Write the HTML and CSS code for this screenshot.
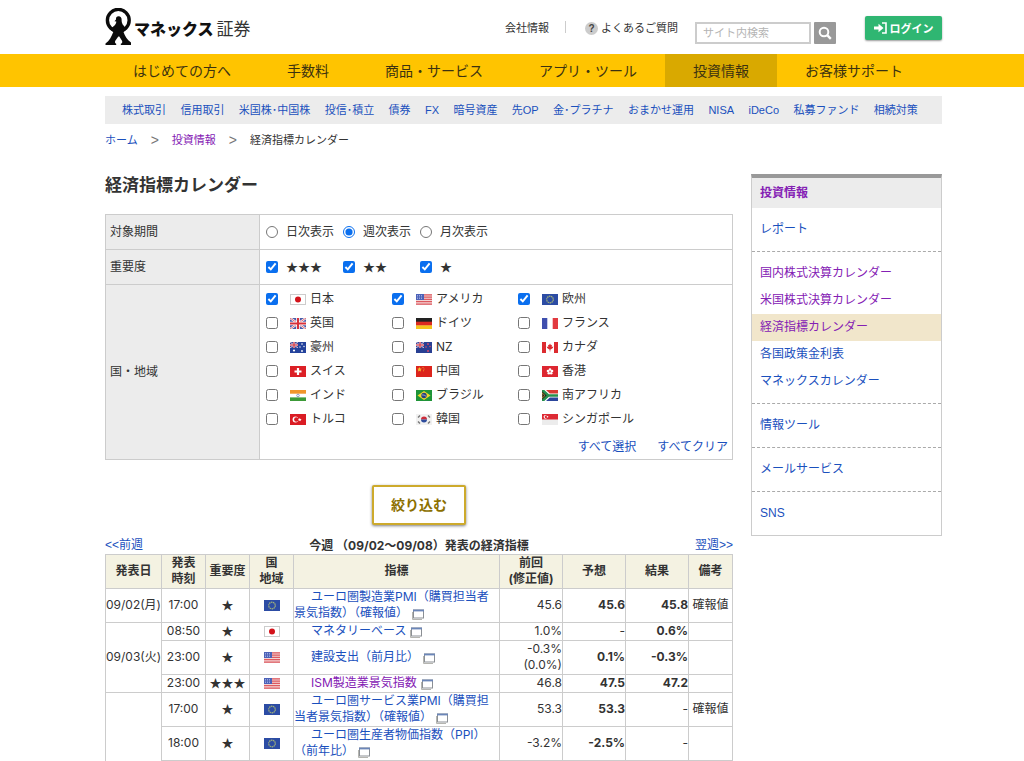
FILE: index.html
```html
<!DOCTYPE html>
<html lang="ja">
<head>
<meta charset="utf-8">
<title>経済指標カレンダー</title>
<link rel="stylesheet" href="styles.css">
</head>
<body>
<svg class="sprite" aria-hidden="true">
  <symbol id="jp" viewBox="0 0 16 11"><rect width="16" height="11" fill="#fff"/><circle cx="8" cy="5.500" r="3" fill="#d3121a"/><rect x=".5" y=".5" width="15" height="10" fill="none" stroke="#ccc"/></symbol>
  <symbol id="us" viewBox="0 0 16 11"><rect width="16" height="11" fill="#f3d4d4"/><path d="M0 .8h16M0 3.100h16M0 5.400h16M0 7.700h16M0 10.200h16" stroke="#dd5a60" stroke-width="1.300"/><rect width="8" height="6" fill="#4c62b8"/><path d="M1 1.500h6M1 3h6M1 4.500h6" stroke="#bcc6ee" stroke-width=".7" stroke-dasharray="1 1"/></symbol>
  <symbol id="eu" viewBox="0 0 16 11"><rect width="16" height="11" fill="#2c4ca4"/><circle cx="8" cy="5.500" r="3.300" fill="none" stroke="#9fb07a" stroke-width="1.200" stroke-dasharray="1.500 .5"/></symbol>
  <symbol id="gb" viewBox="0 0 16 11"><rect width="16" height="11" fill="#4a5ba8"/><path d="M0 0l16 11M16 0L0 11" stroke="#fff" stroke-width="2.200"/><path d="M0 0l16 11M16 0L0 11" stroke="#d8404a" stroke-width=".8"/><path d="M8 0v11M0 5.500h16" stroke="#fff" stroke-width="3.600"/><path d="M8 0v11M0 5.500h16" stroke="#d8303a" stroke-width="2"/></symbol>
  <symbol id="de" viewBox="0 0 16 11"><rect width="16" height="4" fill="#222"/><rect y="3.700" width="16" height="4" fill="#dc2a20"/><rect y="7.400" width="16" height="3.600" fill="#f5c51c"/></symbol>
  <symbol id="fr" viewBox="0 0 16 11"><rect width="16" height="11" fill="#fff"/><rect width="5.300" height="11" fill="#3f4fae"/><rect x="10.700" width="5.300" height="11" fill="#e23a40"/></symbol>
  <symbol id="canton" viewBox="0 0 8 6"><rect width="8" height="6" fill="#3c4c9c"/><path d="M0 0l8 6M8 0L0 6" stroke="#d8c8dc" stroke-width="1"/><path d="M4 0v6M0 3h8" stroke="#e4d4e0" stroke-width="1.800"/><path d="M4 0v6M0 3h8" stroke="#d8303a" stroke-width="1.100"/></symbol>
  <symbol id="au" viewBox="0 0 16 11"><rect width="16" height="11" fill="#24439c"/><use href="#canton" width="8" height="6"/><g fill="#fff"><circle cx="4" cy="8.500" r="1.100"/><circle cx="12" cy="2" r=".8"/><circle cx="10" cy="5" r=".7"/><circle cx="14" cy="4.500" r=".7"/><circle cx="12" cy="9" r=".9"/></g></symbol>
  <symbol id="nz" viewBox="0 0 16 11"><rect width="16" height="11" fill="#283f92"/><use href="#canton" width="8" height="6"/><g fill="#d84a68"><circle cx="12" cy="2" r=".9"/><circle cx="10" cy="5" r=".8"/><circle cx="14" cy="4.500" r=".8"/><circle cx="12" cy="9" r="1"/></g></symbol>
  <symbol id="ca" viewBox="0 0 16 11"><rect width="16" height="11" fill="#fff"/><path d="M0 0h4v11H0zM12 0h4v11h-4zM8 1.500l1 1.800 1-.5-.3 2.200 1.600-.5-.5 1.500-2 1.600H8.300v1.900h-.6V7.600h-.5l-2-1.600-.5-1.500 1.600.5L6 2.800l1 .5z" fill="#dc2b30"/></symbol>
  <symbol id="ch" viewBox="0 0 16 11"><rect width="16" height="11" fill="#dc2026"/><path d="M8 2v7M4.500 5.500h7" stroke="#fff" stroke-width="2.200"/></symbol>
  <symbol id="cn" viewBox="0 0 16 11"><rect width="16" height="11" fill="#dc241c"/><path d="M3.500 1l.7 1.500 1.600.2-1.200 1.100.4 1.700-1.500-.8-1.500.8.400-1.700L1.200 2.700l1.600-.2z" fill="#f6c02c"/><g fill="#f6c02c"><circle cx="7" cy="1.500" r=".5"/><circle cx="8" cy="3" r=".5"/><circle cx="7.600" cy="4.800" r=".5"/></g></symbol>
  <symbol id="hk" viewBox="0 0 16 11"><rect width="16" height="11" fill="#dd2630"/><g fill="#fff"><circle cx="8" cy="3.600" r="1.300"/><circle cx="10" cy="5" r="1.300"/><circle cx="9.200" cy="7.300" r="1.300"/><circle cx="6.800" cy="7.300" r="1.300"/><circle cx="6" cy="5" r="1.300"/></g><circle cx="8" cy="5.500" r=".7" fill="#e89a9e"/></symbol>
  <symbol id="in" viewBox="0 0 16 11"><rect width="16" height="11" fill="#fff"/><rect width="16" height="3.700" fill="#f0962c"/><rect y="7.400" width="16" height="3.600" fill="#3c9a38"/><circle cx="8" cy="5.500" r="1.300" fill="none" stroke="#7a86b8" stroke-width=".8"/></symbol>
  <symbol id="br" viewBox="0 0 16 11"><rect width="16" height="11" fill="#1f9438"/><path d="M8 1l6.500 4.500L8 10 1.500 5.500z" fill="#f2d829"/><circle cx="8" cy="5.500" r="2.700" fill="#24407c"/><path d="M5.800 4.900q2.500-.3 4.300 1.400" stroke="#dfe8f4" stroke-width=".6" fill="none"/></symbol>
  <symbol id="za" viewBox="0 0 16 11"><rect width="16" height="5.500" fill="#d93a32"/><rect y="5.500" width="16" height="5.500" fill="#2b469c"/><path d="M0-1l7 6.500L0 12M7 5.500h9" stroke="#fff" stroke-width="4" fill="none"/><path d="M0 0v11l6-5.500z" fill="#222"/><path d="M0-.5l6.500 6L0 11.500M6 5.500h10" stroke="#27904c" stroke-width="2.400" fill="none"/><path d="M0 2.800v5.400l3-2.700z" fill="#222" stroke="#ecc53a" stroke-width=".6"/></symbol>
  <symbol id="tr" viewBox="0 0 16 11"><rect width="16" height="11" fill="#da1c24"/><circle cx="5.500" cy="5.500" r="2.900" fill="#fff"/><circle cx="6.300" cy="5.500" r="2.200" fill="#da1c24"/><path d="M9.800 3.800l.5 1.200 1.300.1-1 .8.3 1.300-1.100-.7-1.100.7.300-1.300-1-.8 1.300-.1z" fill="#fff"/></symbol>
  <symbol id="kr" viewBox="0 0 16 11"><rect width="16" height="11" fill="#f1f1f1"/><path d="M5 5.500a3 3 0 0 1 6 0z" fill="#cf2c3a"/><path d="M5 5.500a3 3 0 0 0 6 0z" fill="#2e4c9c"/><path d="M2 3.500l2-2M12 1.500l2 2M2 7.500l2 2M12 9.500l2-2" stroke="#777" stroke-width="1.400"/></symbol>
  <symbol id="sg" viewBox="0 0 16 11"><rect width="16" height="11" fill="#ececec"/><rect width="16" height="5.500" fill="#dd2a34"/><circle cx="3.500" cy="2.800" r="1.900" fill="#fff"/><circle cx="4.300" cy="2.800" r="1.600" fill="#dd2a34"/><circle cx="5.500" cy="2.800" r=".8" fill="#fff"/></symbol>
  <symbol id="win" viewBox="0 0 12 11"><path d="M.5 3v7.500H10" fill="none" stroke="#b5b5b0" stroke-width="1"/><rect x="1.500" y="1" width="10" height="8" fill="#fff" stroke="#8b8f94"/><path d="M1 1.500h11" stroke="#6b86b8" stroke-width="1.800"/></symbol>
</svg>

<header class="header">
  <a class="logo" href="#">
    <svg class="logo-mark" viewBox="0 0 27 38" aria-hidden="true"><circle cx="13.300" cy="12.300" r="10.900" fill="none" stroke="#0b0b0b" stroke-width="3.400"/><path d="M9.500 13.200l1.500-1.800c-.2-2 .8-3.200 2.600-3.200 2 0 3 1.400 3 3.400 0 2.400.2 4.400 2.400 6.400l2.500 3.500-3 2.500c1.500 4 3.500 8 7.500 10.500V37H15.800v-1.200c1.700-.5 1.700-1.600 1.200-3l-2.700-4.300h-1l-3 4.300c-.7 1.400-.3 2.500.9 3V37H.5v-1.500C4.500 33 6.500 28.500 8.300 24l-3-2.500 3-3c1.800-1.300 3-2.800 3-5z" fill="#0b0b0b"/></svg>
    <span class="logo-name">マネックス<span class="logo-sub">証券</span></span>
  </a>
  <div class="tools">
    <a class="tool" href="#">会社情報</a>
    <span class="divider"></span>
    <a class="tool faq" href="#"><span class="q">?</span>よくあるご質問</a>
    <form class="search" role="search">
      <input class="search-box" type="text" placeholder="サイト内検索" aria-label="サイト内検索">
      <button class="search-btn" type="button" aria-label="検索"><svg viewBox="0 0 14 14" width="14" height="14"><circle cx="6" cy="6" r="4.300" fill="none" stroke="#fff" stroke-width="2"/><path d="M9.200 9.200l3.600 3.600" stroke="#fff" stroke-width="2.400"/></svg></button>
    </form>
    <button class="login" type="button"><svg viewBox="0 0 13 12" width="13" height="12" aria-hidden="true"><path d="M8 1h4v10H8" fill="none" stroke="#fff" stroke-width="1.600"/><path d="M0 4.500h4.500V1.800L9.500 6l-5 4.200V7.500H0z" fill="#fff"/></svg>ログイン</button>
  </div>
</header>

<nav class="gnav">
  <a href="#">はじめての方へ</a><a href="#">手数料</a><a href="#">商品・サービス</a><a href="#">アプリ・ツール</a><a class="on" href="#">投資情報</a><a href="#">お客様サポート</a>
</nav>

<div class="page">
  <nav class="subnav">
    <a href="#">株式取引</a><a href="#">信用取引</a><a href="#">米国株･中国株</a><a href="#">投信･積立</a><a href="#">債券</a><a href="#">FX</a><a href="#">暗号資産</a><a href="#">先OP</a><a href="#">金･プラチナ</a><a href="#">おまかせ運用</a><a href="#">NISA</a><a href="#">iDeCo</a><a href="#">私募ファンド</a><a href="#">相続対策</a>
  </nav>
  <div class="crumbs">
    <a href="#">ホーム</a><span class="sep">&gt;</span><a class="visited" href="#">投資情報</a><span class="sep">&gt;</span><span>経済指標カレンダー</span>
  </div>

  <div class="columns">
    <main class="main">
      <h1>経済指標カレンダー</h1>
      <form>
        <table class="filter">
          <tr><th>対象期間</th><td><div class="choices">
            <label><input type="radio" name="term">日次表示</label>
            <label><input type="radio" name="term" checked>週次表示</label>
            <label><input type="radio" name="term">月次表示</label>
          </div></td></tr>
          <tr><th>重要度</th><td><div class="choices star">
            <label><input type="checkbox" checked>★★★</label>
            <label><input type="checkbox" checked>★★</label>
            <label><input type="checkbox" checked>★</label>
          </div></td></tr>
          <tr><th>国・地域</th><td>
            <div class="countries">
              <label><input type="checkbox" checked><svg class="flag"><use href="#jp"/></svg>日本</label>
              <label><input type="checkbox" checked><svg class="flag"><use href="#us"/></svg>アメリカ</label>
              <label><input type="checkbox" checked><svg class="flag"><use href="#eu"/></svg>欧州</label>
              <label><input type="checkbox"><svg class="flag"><use href="#gb"/></svg>英国</label>
              <label><input type="checkbox"><svg class="flag"><use href="#de"/></svg>ドイツ</label>
              <label><input type="checkbox"><svg class="flag"><use href="#fr"/></svg>フランス</label>
              <label><input type="checkbox"><svg class="flag"><use href="#au"/></svg>豪州</label>
              <label><input type="checkbox"><svg class="flag"><use href="#nz"/></svg>NZ</label>
              <label><input type="checkbox"><svg class="flag"><use href="#ca"/></svg>カナダ</label>
              <label><input type="checkbox"><svg class="flag"><use href="#ch"/></svg>スイス</label>
              <label><input type="checkbox"><svg class="flag"><use href="#cn"/></svg>中国</label>
              <label><input type="checkbox"><svg class="flag"><use href="#hk"/></svg>香港</label>
              <label><input type="checkbox"><svg class="flag"><use href="#in"/></svg>インド</label>
              <label><input type="checkbox"><svg class="flag"><use href="#br"/></svg>ブラジル</label>
              <label><input type="checkbox"><svg class="flag"><use href="#za"/></svg>南アフリカ</label>
              <label><input type="checkbox"><svg class="flag"><use href="#tr"/></svg>トルコ</label>
              <label><input type="checkbox"><svg class="flag"><use href="#kr"/></svg>韓国</label>
              <label><input type="checkbox"><svg class="flag"><use href="#sg"/></svg>シンガポール</label>
            </div>
            <div class="bulk"><a href="#">すべて選択</a><a href="#">すべてクリア</a></div>
          </td></tr>
        </table>
        <div class="submit"><button class="narrow" type="button">絞り込む</button></div>
      </form>

      <div class="week">
        <a href="#">&lt;&lt;前週</a>
        <strong>今週 （09/02～09/08）発表の経済指標</strong>
        <a href="#">翌週&gt;&gt;</a>
      </div>
      <table class="results">
        <colgroup><col class="c-date"><col class="c-slim"><col class="c-slim"><col class="c-slim"><col><col class="c-num"><col class="c-num"><col class="c-num"><col class="c-note"></colgroup>
        <thead><tr><th>発表日</th><th>発表<br>時刻</th><th>重要度</th><th>国<br>地域</th><th>指標</th><th>前回<br>(修正値)</th><th>予想</th><th>結果</th><th>備考</th></tr></thead>
        <tbody>
          <tr><td>09/02(月)</td><td>17:00</td><td class="star">★</td><td><svg class="flag"><use href="#eu"/></svg></td><td class="name"><a href="#">ユーロ圏製造業PMI（購買担当者景気指数）（確報値）<svg class="win"><use href="#win"/></svg></a></td><td class="num">45.6</td><td class="num b">45.6</td><td class="num b">45.8</td><td class="note">確報値</td></tr>
          <tr><td rowspan="3">09/03(火)</td><td>08:50</td><td class="star">★</td><td><svg class="flag"><use href="#jp"/></svg></td><td class="name"><a href="#">マネタリーベース<svg class="win"><use href="#win"/></svg></a></td><td class="num">1.0%</td><td class="num">-</td><td class="num b">0.6%</td><td></td></tr>
          <tr><td>23:00</td><td class="star">★</td><td><svg class="flag"><use href="#us"/></svg></td><td class="name"><a href="#">建設支出（前月比）<svg class="win"><use href="#win"/></svg></a></td><td class="num">-0.3%<br>(0.0%)</td><td class="num b">0.1%</td><td class="num b">-0.3%</td><td></td></tr>
          <tr><td>23:00</td><td class="star">★★★</td><td><svg class="flag"><use href="#us"/></svg></td><td class="name"><a class="visited" href="#">ISM製造業景気指数<svg class="win"><use href="#win"/></svg></a></td><td class="num">46.8</td><td class="num b">47.5</td><td class="num b">47.2</td><td></td></tr>
          <tr><td class="open" rowspan="2"></td><td>17:00</td><td class="star">★</td><td><svg class="flag"><use href="#eu"/></svg></td><td class="name"><a href="#">ユーロ圏サービス業PMI（購買担当者景気指数）（確報値）<svg class="win"><use href="#win"/></svg></a></td><td class="num">53.3</td><td class="num b">53.3</td><td class="num">-</td><td class="note">確報値</td></tr>
          <tr><td>18:00</td><td class="star">★</td><td><svg class="flag"><use href="#eu"/></svg></td><td class="name"><a href="#">ユーロ圏生産者物価指数（PPI）（前年比）<svg class="win"><use href="#win"/></svg></a></td><td class="num">-3.2%</td><td class="num b">-2.5%</td><td class="num">-</td><td></td></tr>
        </tbody>
      </table>
    </main>

    <aside class="side">
      <a class="side-head" href="#">投資情報</a>
      <ul><li><a href="#">レポート</a></li></ul>
      <ul>
        <li><a class="visited" href="#">国内株式決算カレンダー</a></li>
        <li><a class="visited" href="#">米国株式決算カレンダー</a></li>
        <li class="on"><a class="visited" href="#">経済指標カレンダー</a></li>
        <li><a href="#">各国政策金利表</a></li>
        <li><a href="#">マネックスカレンダー</a></li>
      </ul>
      <ul><li><a href="#">情報ツール</a></li></ul>
      <ul><li><a href="#">メールサービス</a></li></ul>
      <ul><li><a href="#">SNS</a></li></ul>
    </aside>
  </div>
</div>
</body>
</html>
```
FILE: styles.css
```css
* { box-sizing: border-box; }
body {
  margin: 0;
  background: #fff;
  color: #333;
  font: 12px/16px "Liberation Sans", "Noto Sans CJK JP", sans-serif;
}
a { color: #1a50bd; text-decoration: none; }
a.visited { color: #8420b4; }
input, button { font-family: inherit; margin: 0; }
button { cursor: pointer; }
.sprite { display: none; }
.flag { width: 16px; height: 11px; flex: none; }

/* header */
.header {
  display: flex;
  justify-content: space-between;
  align-items: flex-start;
  height: 54px;
  padding: 0 82px 0 105px;
}
.logo { display: flex; gap: 2px; padding-top: 8px; color: #111; }
.logo-mark { width: 27px; height: 38px; }
.logo-name { font-size: 16px; font-weight: 900; line-height: 44px; white-space: nowrap; }
.logo-sub { font-size: 17px; font-weight: 400; margin-left: 3px; color: #333; }
.tools { display: flex; align-items: flex-start; padding-top: 16px; font-size: 11px; line-height: 24px; white-space: nowrap; }
.tool { color: #333; }
.divider { width: 1px; height: 12px; margin: 5px 19px 0 16px; background: #ccc; }
.faq { display: flex; align-items: center; gap: 3px; }
.q { width: 13px; height: 13px; border-radius: 50%; background: #ccc; color: #444; font-weight: bold; font-size: 10px; line-height: 13px; text-align: center; }
.search { display: flex; gap: 3px; margin: 6px 29px 0 17px; }
.search-box { width: 116px; height: 22px; padding: 0 6px; border: 2px solid #ccc; border-radius: 0; font-size: 11px; }
.search-box::placeholder { color: #b4b4b4; }
.search-btn { display: flex; align-items: center; justify-content: center; width: 22px; height: 22px; padding: 0; border: 0; border-radius: 1px; background: #999; }
.login {
  display: flex; align-items: center; justify-content: center; gap: 3px;
  width: 77px; height: 24px; padding: 0; border: 0; border-radius: 2px;
  background: #2fb672; color: #fff; font-size: 11px; font-weight: bold;
  box-shadow: 0 1px 2px rgba(0,0,0,.4);
}

/* global navigation */
.gnav { display: flex; height: 33px; padding: 0 82px 0 105px; background: #ffc400; white-space: nowrap; }
.gnav a { padding: 0 28px; color: #3c3210; font-size: 14px; line-height: 34px; }
.gnav .on { background: #d9a900; }

.page { padding: 9px 82px 0 105px; }
.subnav { display: flex; justify-content: space-between; padding: 0 24px 0 17px; background: #ececec; font-size: 11px; line-height: 28px; white-space: nowrap; }
.crumbs { display: flex; gap: 13px; padding-top: 7px; font-size: 11px; line-height: 18px; }
.sep { color: #777; font-size: 14px; }
.columns { display: flex; align-items: flex-start; gap: 18px; padding-top: 25px; }
.main { flex: 1; min-width: 0; font-family: Inter, "Noto Sans CJK JP", sans-serif; }
h1 { margin: 0 0 18px; font-size: 17px; line-height: 22px; }

/* filter form */
table { width: 100%; border-collapse: collapse; }
.filter th, .filter td { height: 35px; padding: 0; border: 1px solid #ccc; }
.filter th { width: 154px; padding-left: 4px; background: #ececec; font-weight: normal; text-align: left; }
.filter td { padding: 0 4px 0 6px; }
.filter input { width: 12px; height: 12px; accent-color: #0a6fef; }
.filter label { display: flex; align-items: center; white-space: nowrap; }
.choices { display: grid; grid-template-columns: 77px 77px 77px; }
.choices label { gap: 8px; }
.star { font-family: "Noto Sans CJK JP", sans-serif; }
.countries { display: grid; grid-template-columns: 126px 126px 1fr; grid-auto-rows: 24px; padding-top: 2px; }
.countries .flag { margin: 0 4px 0 12px; }
.bulk { display: flex; justify-content: flex-end; gap: 21px; padding: 7px 0 3px; line-height: 18px; }
.submit { padding: 25px 0 12px; text-align: center; }
.narrow {
  display: block; width: 94px; height: 40px; margin: 0 auto; padding: 0 0 2px;
  border: 2px solid #cdaa2c; border-radius: 2px; background: #fff;
  color: #8c7000; font-size: 14px; font-weight: bold;
  box-shadow: 0 1px 3px rgba(0,0,0,.5);
}

/* weekly results */
.week { display: flex; justify-content: space-between; line-height: 17px; }
.week a { font-family: "Liberation Sans", "Noto Sans CJK JP", sans-serif; }
.results { table-layout: fixed; }
.results th, .results td { padding: 0 0 1px; border: 1px solid #ccc; text-align: center; white-space: nowrap; }
.results th { background: #f4f2e2; }
.results td.name { text-align: left; text-indent: 17px; white-space: normal; }
.results td.num { text-align: right; }
.results .b { font-weight: bold; }
.results .open { border-bottom: 0; }
.results .flag { display: block; margin: 0 auto; }
.c-date { width: 56px; }
.c-slim { width: 44px; }
.c-num { width: 63px; }
.c-note { width: 44px; }
.win { width: 12px; height: 11px; margin-left: 4px; vertical-align: -3px; }

/* side menu */
.side { flex: none; width: 191px; border: 1px solid #ccc; border-top: 4px solid #999; }
.side-head { display: block; padding-left: 8px; background: #ececec; color: #8420b4; font-weight: bold; line-height: 30px; }
.side ul { margin: 0; padding: 8px 0; border-bottom: 1px dashed #aaa; list-style: none; }
.side ul:last-child { border-bottom: 0; }
.side li { padding-left: 8px; line-height: 27px; }
.side .on { background: #f1e6cb; }
```
